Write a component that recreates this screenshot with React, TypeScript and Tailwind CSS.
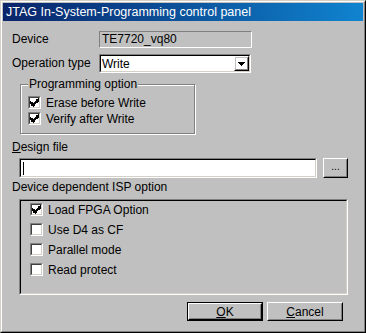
const font = { fontFamily: '"Liberation Sans", Arial, sans-serif' };

function Check({ checked }: { checked: boolean }) {
  return (
    <span className="flex h-[13px] w-[13px] shrink-0 border border-t-[#808080] border-l-[#808080] border-b-white border-r-white">
      <span className="flex h-full w-full items-center justify-center border border-t-[#404040] border-l-[#404040] border-b-[#d4d0c8] border-r-[#d4d0c8] bg-white">
        {checked && (
          <svg width="9" height="9" viewBox="0 0 7 7" shapeRendering="crispEdges">
            <path d="M0 2h1v3h-1zM1 3h1v3h-1zM2 4h1v3h-1zM3 3h1v3h-1zM4 2h1v3h-1zM5 1h1v3h-1zM6 0h1v3h-1z" fill="#000" />
          </svg>
        )}
      </span>
    </span>
  );
}

function CheckRow({ label, checked, className = '' }: { label: string; checked: boolean; className?: string }) {
  return (
    <div className={`flex h-[13px] items-center gap-[5px] ${className}`}>
      <Check checked={checked} />
      <span className="leading-none">{label}</span>
    </div>
  );
}

function Button({ children, isDefault = false, className = '' }: { children: React.ReactNode; isDefault?: boolean; className?: string }) {
  return (
    <div className={`${isDefault ? 'border border-black' : ''} ${className}`}>
      <div className="h-full border border-t-white border-l-white border-b-black border-r-black">
        <div className="flex h-full items-center justify-center border border-t-[#c0c0c0] border-l-[#c0c0c0] border-b-[#808080] border-r-[#808080]">
          {children}
        </div>
      </div>
    </div>
  );
}

const sunken = 'border border-t-[#808080] border-l-[#808080] border-b-white border-r-white';
const sunkenInner = 'border border-t-black border-l-black border-b-[#d4d0c8] border-r-[#d4d0c8]';

export default function App() {
  return (
    <div className="h-[333px] w-[366px] bg-[#c0c0c0] text-[12px] text-black" style={font}>
      <div className="h-full w-full border border-t-[#d4d0c8] border-l-[#d4d0c8] border-b-black border-r-black">
        <div className="flex h-full w-full flex-col border border-t-white border-l-white border-b-[#808080] border-r-[#808080] p-px">
          <div className="flex h-[18px] items-center bg-gradient-to-r from-[#0a246a] to-[#1084d0] pl-[3px] text-[12.5px] text-white">
            JTAG In-System-Programming control panel
          </div>

          <div className="flex flex-col pl-[9px]">
            <div className="mt-[9px] flex items-center">
              <span className="w-[87px]">Device</span>
              <div className={`flex h-[17px] w-[153px] items-center bg-[#c0c0c0] pl-[2px] ${sunken}`}>TE7720_vq80</div>
            </div>

            <div className="mt-[6px] flex items-center">
              <span className="w-[87px] -translate-y-[1px]">Operation type</span>
              <div className={`h-[19px] w-[152px] ${sunken}`}>
                <div className={`flex h-full items-center bg-white ${sunkenInner}`}>
                  <span className="flex-1 pl-[1px]">Write</span>
                  <Button className="h-[15px] w-[15px]">
                    <svg width="7" height="4" viewBox="0 0 7 4" shapeRendering="crispEdges">
                      <path d="M0 0h7v1h-7zM1 1h5v1h-5zM2 2h3v1h-3zM3 3h1v1h-1z" fill="#000" />
                    </svg>
                  </Button>
                </div>
              </div>
            </div>

            <div className="ml-[8px] mt-[11px] flex h-[50px] w-[175px] flex-col border border-[#808080] pl-[7px] shadow-[inset_1px_1px_0_#fff,1px_1px_0_#fff]">
              <span className="-mt-[8px] w-fit bg-[#c0c0c0] px-px leading-[14px]">Programming option</span>
              <CheckRow className="mt-[5px]" label="Erase before Write" checked />
              <CheckRow className="mt-[3px]" label="Verify after Write" checked />
            </div>

            <div className="mt-[6px] leading-[14px]">
              <span className="underline">D</span>esign file
            </div>

            <div className="mt-[4px] flex items-center">
              <div className={`ml-[7px] h-[20px] w-[298px] ${sunken}`}>
                <div className={`flex h-full items-center bg-white pl-[2px] ${sunkenInner}`}>
                  <span className="h-[13px] w-px bg-black" />
                </div>
              </div>
              <Button className="ml-[6px] h-[20px] w-[25px]">
                <span className="-mt-[2px] text-[10px] leading-none">...</span>
              </Button>
            </div>

            <div className="mt-[2px] leading-[14px]">Device dependent ISP option</div>

            <div className={`ml-[7px] mt-[5px] h-[96px] w-[329px] ${sunken}`}>
              <div className={`flex h-full flex-col pl-[9px] pt-[2px] ${sunkenInner}`}>
                <CheckRow label="Load FPGA Option" checked />
                <CheckRow className="mt-[7px]" label="Use D4 as CF" checked={false} />
                <CheckRow className="mt-[7px]" label="Parallel mode" checked={false} />
                <CheckRow className="mt-[7px]" label="Read protect" checked={false} />
              </div>
            </div>

            <div className="mt-[7px] flex">
              <Button isDefault className="ml-[175px] h-[19px] w-[76px]">
                <span><span className="underline">O</span>K</span>
              </Button>
              <Button className="ml-[4px] h-[19px] w-[76px]">
                <span><span className="underline">C</span>ancel</span>
              </Button>
            </div>
          </div>
        </div>
      </div>
    </div>
  );
}
